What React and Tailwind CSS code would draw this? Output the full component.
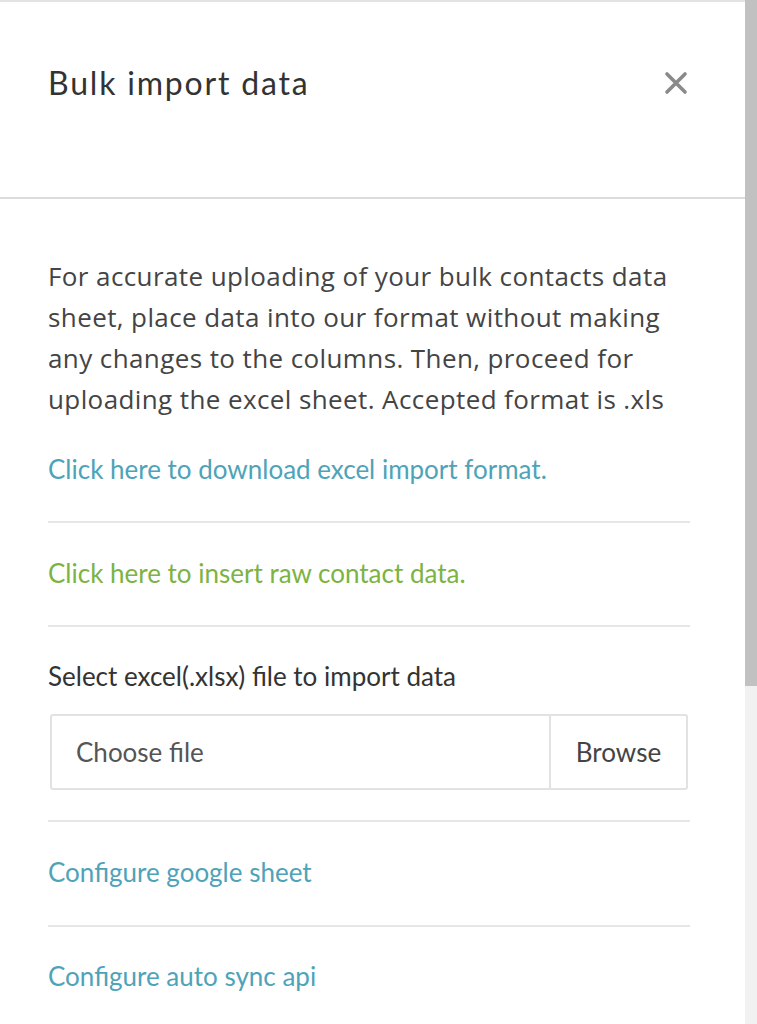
import React from "react";

const nunito = { fontFamily: "Lato, 'Noto Sans', sans-serif" };

const Divider = () => <div className="h-[2px] bg-[#e6e6e6]" />;

const BulkImport = () => {
  return (
    <div className="flex h-[1024px] w-full overflow-hidden bg-white">
      <div className="flex-1 flex flex-col border-t-2 border-[#e3e3e3]">
        {/* header */}
        <div className="h-[195px] shrink-0 flex items-start justify-between pl-12 pr-[57px] pt-[63px]">
          <h2
            className="text-[32px] leading-[36px] tracking-[1.8px] text-[#333]"
            style={nunito}
          >
            Bulk import data
          </h2>
          <button className="mt-[6px] text-[#8a8a8a]" aria-label="close">
            <svg width="24" height="24" viewBox="0 0 24 24">
              <path
                d="M3 3L21 21M21 3L3 21"
                stroke="currentColor"
                strokeWidth="3.6"
                strokeLinecap="round"
              />
            </svg>
          </button>
        </div>
        <div className="h-[2px] shrink-0 bg-[#dcdcdc]" />

        <div className="pl-12 pr-[55px] pt-[57px] shrink-0">
          <p
            className="text-[26px] leading-[41px] tracking-[0.4px] text-[#444] whitespace-nowrap"
            style={{ fontFamily: "'Open Sans', sans-serif" }}
          >
            For accurate uploading of your bulk contacts data
            <br />
            sheet, place data into our format without making
            <br />
            any changes to the columns. Then, proceed for
            <br />
            uploading the excel sheet. Accepted format is .xls
          </p>

          <div className="pt-[33px] pb-[36px]">
            <a className="text-[26px] leading-[32px] text-[#4ea3b8] cursor-pointer" style={nunito}>
              Click here to download excel import format.
            </a>
          </div>
          <Divider />

          <div className="pt-[34px] pb-[36px]">
            <a className="text-[26px] leading-[32px] text-[#7cb342] cursor-pointer" style={nunito}>
              Click here to insert raw contact data.
            </a>
          </div>
          <Divider />

          <div className="pt-[33px] pb-[30px]">
            <p className="text-[26px] leading-[32px] text-[#333]" style={nunito}>
              Select excel(.xlsx) file to import data
            </p>
            <div className="mt-[22px] ml-[2px] mr-[2px] flex h-[76px] rounded-[3px] border-2 border-[#e2e2e2]">
              <div
                className="flex-1 flex items-center pl-[24px] text-[26px] text-[#555]"
                style={nunito}
              >
                Choose file
              </div>
              <div
                className="w-[137px] flex items-center justify-center border-l-2 border-[#e2e2e2] text-[26px] text-[#444]"
                style={nunito}
              >
                Browse
              </div>
            </div>
          </div>
          <Divider />

          <div className="pt-[34px] pb-[37px]">
            <a className="text-[26px] leading-[32px] text-[#4ea3b8] cursor-pointer" style={nunito}>
              Configure google sheet
            </a>
          </div>
          <Divider />

          <div className="pt-[33px] pb-[36px]">
            <a className="text-[26px] leading-[32px] text-[#4ea3b8] cursor-pointer" style={nunito}>
              Configure auto sync api
            </a>
          </div>
        </div>
      </div>

      {/* scrollbar */}
      <div className="w-[12px] shrink-0 flex flex-col">
        <div className="h-[686px] bg-[#c1c1c1]" />
        <div className="flex-1 bg-[#f1f1f1]" />
      </div>
    </div>
  );
};

export default function App() {
  return <BulkImport />;
}
